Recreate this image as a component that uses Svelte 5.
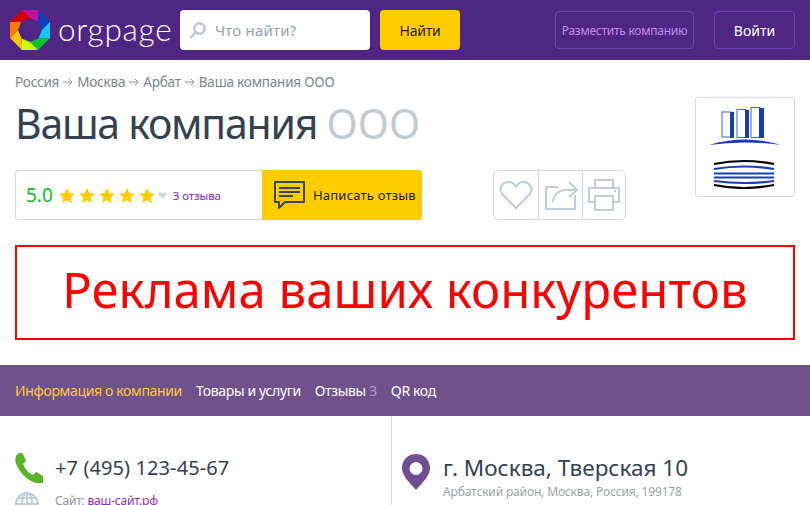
<script>
  const crumbs = ['Россия', 'Москва', 'Арбат', 'Ваша компания ООО'];
  const segs = [
    ['#c4109c', '22,10 38,10 38.500,21.500 30,18'],
    ['#0b3fc4', '38,10 50,22 42,30 38.500,21.500'],
    ['#12c8ff', '50,22 50,38 38.500,38.500 42,30'],
    ['#10c033', '50,38 38,50 30,42 38.500,38.500'],
    ['#c8ff00', '38,50 22,50 21.500,38.500 30,42'],
    ['#ffc400', '22,50 10,38 18,30 21.500,38.500'],
    ['#ff7a00', '10,38 10,22 21.500,21.500 18,30'],
    ['#d40000', '10,22 22,10 30,18 21.500,21.500']
  ];
</script>

<div class="page">
  <header class="top">
    <div class="logo">
      <svg width="40" height="40" viewBox="10 10 40 40">
        {#each segs as s}<polygon fill={s[0]} points={s[1]} />{/each}
      </svg>
      <span class="word">orgpage</span>
    </div>
    <div class="search">
      <svg width="18" height="18" viewBox="0 0 18 18" fill="none" stroke="#b9c7d6" stroke-width="2.4">
        <circle cx="10.500" cy="7.500" r="5.200" /><path d="M6.500 11.500 2 16.500" stroke-linecap="round" />
      </svg>
      <span>Что найти?</span>
    </div>
    <div class="find">Найти</div>
    <div class="place">Разместить компанию</div>
    <div class="login">Войти</div>
  </header>

  <section class="head">
    <div class="head-main">
      <nav class="crumbs">
        {#each crumbs as c, i}
          {#if i > 0}
            <svg class="arr" width="10" height="8" viewBox="0 0 10 8" fill="none" stroke="#8c959e"><path d="M0 4h9M6 1l3 3-3 3" /></svg>
          {/if}
          <span>{c}</span>
        {/each}
      </nav>
      <h1>Ваша компания <span>ООО</span></h1>
      <div class="bar">
        <div class="rating">
          <b>5.0</b>
          <div class="stars">
            {#each [0, 1, 2, 3, 4] as s}
              <svg width="16" height="15" viewBox="0 0 18 17"><path fill="#ffcc00" d="M9 0l2.700 5.800 6.300.7-4.700 4.200 1.300 6.200L9 13.800 3.400 17l1.300-6.300L0 6.500l6.300-.7z" /></svg>
            {/each}
          </div>
          <svg class="chev" width="9" height="7" viewBox="0 0 9 7"><path fill="#cfd6df" d="M0 2 2 0l2.500 1.500L7 0l2 2-4.500 5z" /></svg>
          <a href="#r">3 отзыва</a>
        </div>
        <div class="write">
          <svg width="34" height="30" viewBox="0 0 34 30" fill="none" stroke="#3c4650" stroke-width="2">
            <path d="M3 2h29v20H13l-6 6v-6H3z" stroke-linejoin="round" />
            <path d="M7 8h21M7 12h21M7 16h14" />
          </svg>
          <span>Написать отзыв</span>
        </div>
        <div class="actions">
          <div class="act">
            <svg width="34" height="30" viewBox="0 0 34 30" fill="none" stroke="#bfccd9" stroke-width="2">
              <path d="M17 28 3.500 14.500C-1 9 3 2 9.500 2c3.500 0 6 2 7.500 5 1.500-3 4-5 7.500-5C31 2 35 9 30.500 14.500z" stroke-linejoin="round" />
            </svg>
          </div>
          <div class="act">
            <svg width="34" height="30" viewBox="0 0 34 30" fill="none" stroke="#bfccd9" stroke-width="2">
              <path d="M14 7H2v22h29V15" /><path d="M9 22c1-8 6-12 14-12h9" /><path d="m25 2 8 8-8 7" />
            </svg>
          </div>
          <div class="act">
            <svg width="34" height="32" viewBox="0 0 34 32" fill="none" stroke="#bfccd9" stroke-width="2">
              <path d="M8 9V1h18v8" /><path d="M8 23H2V9h30v14h-6" /><path d="M8 17h18v14H8z" /><path d="M27 12h2" />
            </svg>
          </div>
        </div>
      </div>
    </div>
    <div class="card">
      <svg width="72" height="82" viewBox="0 0 72 82">
        <path d="M0 38Q36 27 72 38Q36 33 0 38Z" fill="#1a3eb0" />
        <g fill="#fff" stroke="#3a63d8" stroke-width="1">
          <rect x="13" y="5" width="9" height="25" />
          <rect x="28" y="2.500" width="9" height="28" />
          <rect x="42" y="0.500" width="9" height="30" />
        </g>
        <g fill="#1a3eb0">
          <rect x="21" y="5" width="4" height="26" />
          <rect x="36" y="3" width="4" height="28" />
          <rect x="50" y="1" width="5" height="30" />
        </g>
        <g fill="none" stroke-width="2.200">
          <path d="M5 57q30-6 60 0M5 78q30 6 60 0" stroke="#000" />
          <path d="M5 62q30-5 60 0M5 66.500h60M5 70.500h60M5 74q30 4 60 0" stroke="#1a3eb0" />
        </g>
      </svg>
    </div>
  </section>

  <div class="ad">Реклама ваших конкурентов</div>

  <nav class="tabs">
    <span class="on">Информация о компании</span>
    <span>Товары и услуги</span>
    <span>Отзывы <i>3</i></span>
    <span>QR код</span>
  </nav>

  <section class="info">
    <div class="left">
      <div class="phone">
        <svg width="28" height="30" viewBox="0 0 28 30"><path fill="#56b426" d="M4 0C-1 3-.5 9 3 15c4 7 11 13 18 15h7v-7c-3-2-5-3-7-4l-3 3C13 20 10 15 8 11l3-3C10 5 9 3 7 0z" /></svg>
        <span>+7 (495) 123-45-67</span>
      </div>
      <div class="site">
        <svg width="24" height="24" viewBox="0 0 24 24" fill="none" stroke="#bfccd9" stroke-width="2">
          <circle cx="12" cy="12" r="11" /><ellipse cx="12" cy="12" rx="5" ry="11" /><path d="M12 1v22M1 12h22M3 6h18M3 18h18" />
        </svg>
        <span>Сайт: <a href="#s">ваш-сайт.рф</a></span>
      </div>
    </div>
    <div class="right">
      <svg width="28" height="36" viewBox="0 0 28 36"><path fill="#6e5090" fill-rule="evenodd" d="M14 0c8 0 14 6 14 14 0 8-8 15-14 22C8 29 0 22 0 14 0 6 6 0 14 0zm0 8a6.500 6.500 0 1 0 0 13 6.500 6.500 0 0 0 0-13z" /></svg>
      <div>
        <div class="addr">г. Москва, Тверская 10</div>
        <div class="sub">Арбатский район, Москва, Россия, 199178</div>
      </div>
    </div>
  </section>
</div>

<style>
  :global(body) { margin: 0; overflow: hidden; background: #fff; }
  .page { width: 810px; height: 505px; overflow: hidden; font-family: "Noto Sans", "Open Sans", sans-serif; color: #344250; }
  .top { height: 60px; background: #4f2683; display: flex; align-items: center; box-sizing: border-box; padding: 0 15px 0 10px; }
  .logo { display: flex; align-items: center; width: 170px; gap: 8px; }
  .word { font-family: Lato, sans-serif; font-weight: 300; font-size: 31.500px; color: #fff; letter-spacing: 0.75px; margin-top: -3px; }
  .search { width: 190px; height: 40px; background: #fff; border-radius: 4px; display: flex; align-items: center; box-sizing: border-box; padding-left: 9px; gap: 8px; font-size: 15px; letter-spacing: 0.2px; color: #98a1aa; }
  .find { width: 80px; height: 40px; margin-left: 10px; background: #ffcc00; border-radius: 4px; display: flex; align-items: center; justify-content: center; font-size: 14px; letter-spacing: -0.2px; color: #222; }
  .place { width: 139px; height: 38px; box-sizing: border-box; margin-left: 95px; border: 1px solid #6c42a4; border-radius: 4px; display: flex; align-items: center; justify-content: center; font-size: 12px; color: #c58af0; letter-spacing: -0.25px; white-space: nowrap; }
  .login { width: 81px; height: 38px; box-sizing: border-box; margin-left: 20px; border: 1px solid #7339b8; border-radius: 4px; display: flex; align-items: center; justify-content: center; font-size: 14px; color: #fff; }

  .head { display: flex; justify-content: space-between; padding: 0 15px; height: 185px; }
  .head-main { width: 650px; }
  .crumbs { margin-top: 13px; display: flex; align-items: center; gap: 4px; font-size: 13.500px; line-height: 18px; color: #7b858f; letter-spacing: -0.2px; white-space: nowrap; }
  h1 { margin: 7px 0 0; font-size: 41px; font-weight: 400; line-height: 50px; color: #344250; letter-spacing: -1.25px; white-space: nowrap; }
  h1 span { color: #c3cad1; letter-spacing: 0.1px; }
  .bar { display: flex; margin-top: 22px; height: 50px; }
  .rating { width: 247px; box-sizing: border-box; border: 1px solid #d5dce6; border-right: 0; border-radius: 3px 0 0 3px; display: flex; align-items: center; padding-left: 10px; }
  .rating b { font-weight: 400; font-size: 19px; color: #0ebd2b; margin-right: 6px; }
  .stars { display: flex; gap: 4px; }
  .stars svg { display: block; }
  .chev { margin: 0 6px 0 3px; }
  .rating a { font-size: 11.500px; color: #7a2fc4; text-decoration: none; letter-spacing: -0.1px; }
  .write { width: 160px; background: #ffcc00; border-radius: 0 3px 3px 0; display: flex; align-items: center; box-sizing: border-box; padding-left: 10px; gap: 7px; font-size: 13px; color: #1c1c1c; white-space: nowrap; letter-spacing: 0.2px; }
  .actions { display: flex; margin-left: 71px; border: 1px solid #d5dce6; border-radius: 5px; height: 50px; box-sizing: border-box; }
  .act { width: 44px; box-sizing: border-box; display: flex; align-items: center; justify-content: center; border-left: 1px solid #d5dce6; }
  .act:first-child { border-left: 0; }
  .act:last-child { width: 43px; }
  .card { width: 100px; height: 100px; margin-top: 37px; box-sizing: border-box; border: 1px solid #d5dce6; border-radius: 3px; display: flex; justify-content: center; padding-top: 9px; }
  .card svg { display: block; }

  .ad { margin: 0 15px; height: 95px; box-sizing: border-box; border: 2px solid #f00; padding-bottom: 8px; color: #f00; display: flex; align-items: center; justify-content: center; font-size: 49px; letter-spacing: 0.06px; white-space: nowrap; }

  .tabs { margin-top: 25px; height: 51px; background: #6f518c; display: flex; align-items: center; padding-left: 15px; gap: 14px; font-size: 14px; color: #fff; letter-spacing: -0.35px; white-space: nowrap; }
  .tabs .on { color: #ffcc33; }
  .tabs i { font-style: normal; color: #a79bb7; }

  .info { display: flex; height: 89px; }
  .left { width: 376px; padding-left: 15px; border-right: 1px solid #d5dce6; }
  .phone { display: flex; align-items: center; gap: 12px; margin-top: 37px; font-size: 20px; line-height: 30px; letter-spacing: 0.1px; white-space: nowrap; }
  .phone svg, .site svg { flex: none; display: block; }
  .site { display: flex; gap: 16px; margin-top: 9px; font-size: 12px; color: #8c959e; line-height: 18px; letter-spacing: -0.2px; }
  .site a { color: #8a2cc8; text-decoration: none; }
  .right { display: flex; gap: 13px; padding: 38px 0 0 10px; }
  .addr { font-size: 22.500px; line-height: 30px; margin-top: -1px; white-space: nowrap; }
  .sub { font-size: 12px; line-height: 16px; margin-top: 1px; color: #9aa2aa; white-space: nowrap; letter-spacing: -0.15px; }
</style>
